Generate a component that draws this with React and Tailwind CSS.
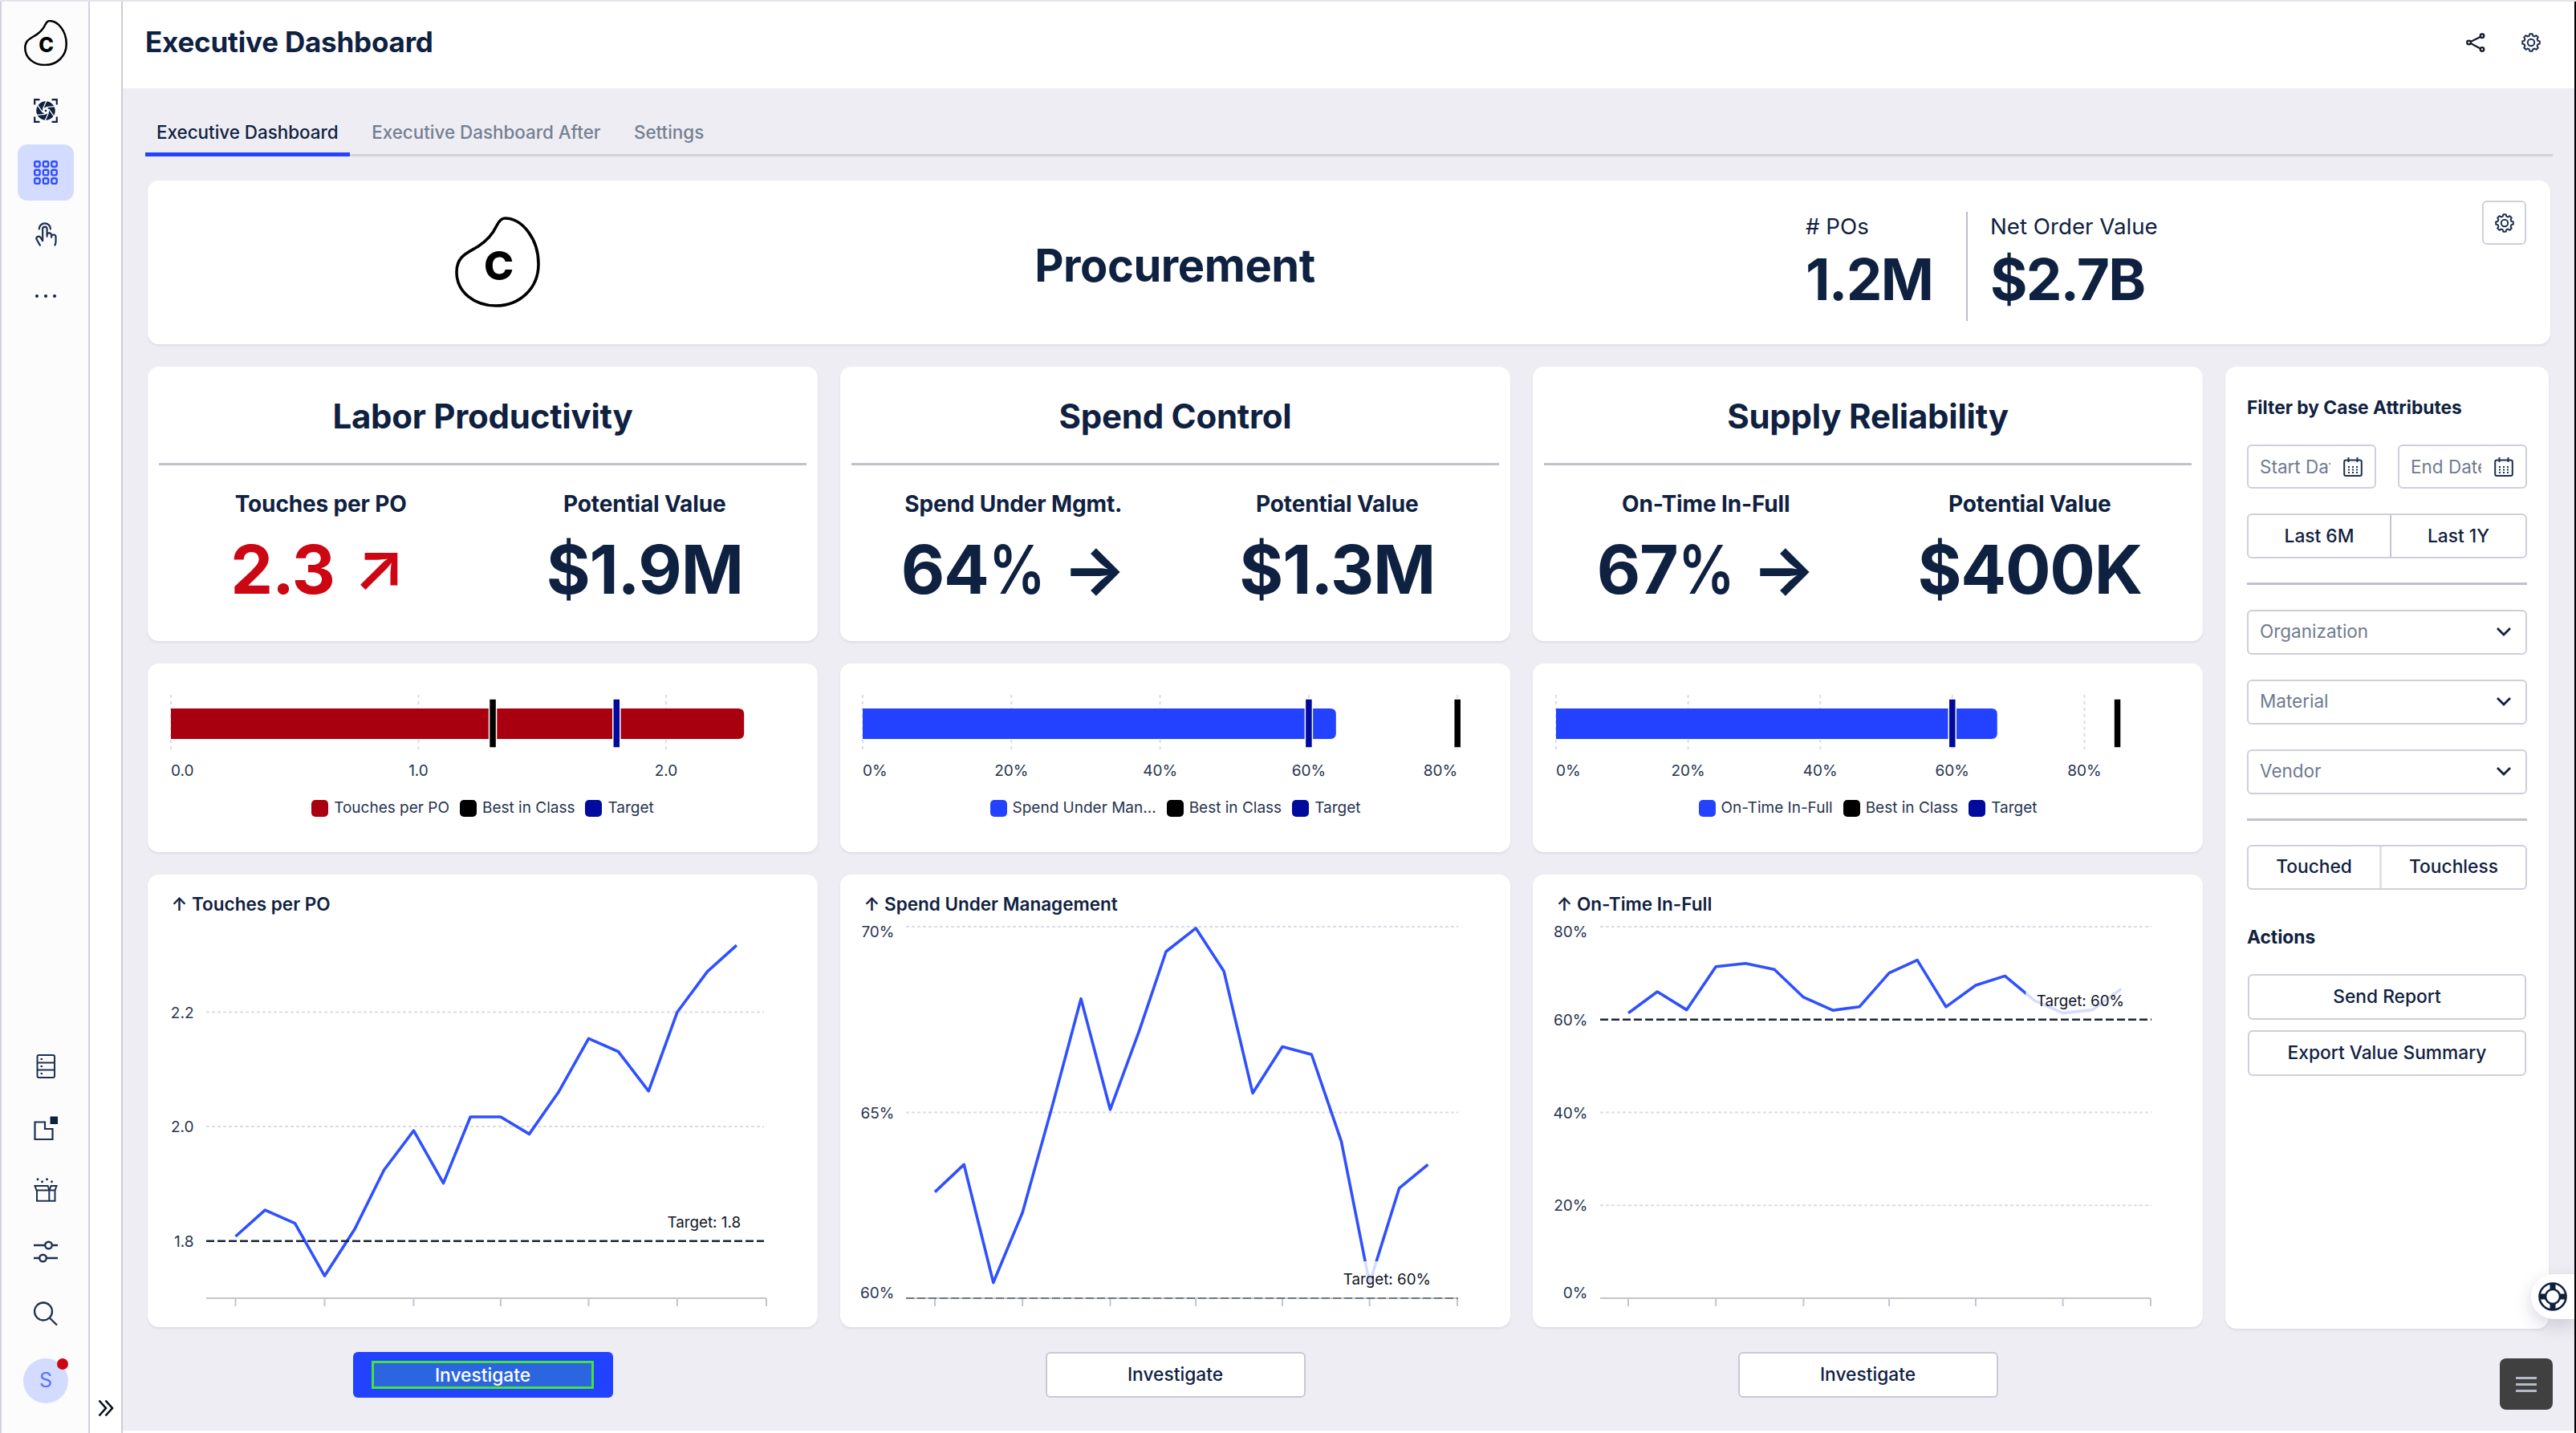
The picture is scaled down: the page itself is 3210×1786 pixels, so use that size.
import { PiHandTap } from 'react-icons/pi';

// Horizontal offsets (px) of the monthly data points
const MONTHS = [0, 36.8, 74, 111, 148.6, 185, 222, 259, 292.7, 330.4, 366, 402.4, 440, 477, 514.7, 550.4, 588, 624.4];
const TICKS = [0, 111, 222, 330.4, 440, 550.4, 661.5];

const KPIS = [
  {
    title: 'Labor Productivity',
    label: 'Touches per PO',
    value: '2.3',
    arrow: '↗',
    alert: true,
    potential: '$1.9M',
    bullet: {
      start: 29, unit: 308.5, value: 2.315, best: 1.3, target: 1.8, color: '#a9000f', legend: 'Touches per PO',
      ticks: [
        { v: 0, text: '0.0', anchor: 'start' },
        { v: 1, text: '1.0', anchor: 'middle' },
        { v: 2, text: '2.0', anchor: 'middle' },
      ],
    },
    line: {
      title: 'Touches per PO', x0: 109.5, xScale: 1, left: 73, right: 768, labelX: 57.5,
      min: 1.7, unit: 713, target: 1.8, targetText: 'Target: 1.8', targetX: 739, targetY: 433,
      grid: [{ v: 2.2, text: '2.2' }, { v: 2.0, text: '2.0' }, { v: 1.8, text: '1.8', hidden: true }],
      data: [1.808, 1.854, 1.831, 1.739, 1.821, 1.924, 1.993, 1.901, 2.017, 2.017, 1.987, 2.06, 2.154, 2.131, 2.062, 2.2, 2.271, 2.317],
    },
  },
  {
    title: 'Spend Control',
    label: 'Spend Under Mgmt.',
    value: '64',
    percent: true,
    arrow: '→',
    potential: '$1.3M',
    bullet: {
      start: 28, unit: 9.265, value: 63.66, best: 80, target: 60, color: '#2342ff', legend: 'Spend Under Man...',
      ticks: [
        { v: 0, text: '0%', anchor: 'start' },
        { v: 20, text: '20%', anchor: 'middle' },
        { v: 40, text: '40%', anchor: 'middle' },
        { v: 60, text: '60%', anchor: 'middle' },
        { v: 80, text: '80%', anchor: 'end' },
      ],
    },
    line: {
      title: 'Spend Under Management', x0: 118, xScale: 0.984, left: 82, right: 770, labelX: 67.5,
      min: 60, unit: 46.3, target: 60, targetText: 'Target: 60%', targetX: 736, targetY: 504,
      grid: [{ v: 70, text: '70%', dy: 6 }, { v: 65, text: '65%' }, { v: 60, text: '60%', dy: -7, hidden: true }],
      data: [62.86, 63.6, 60.42, 62.31, 65.17, 68.06, 65.08, 67.21, 69.33, 69.96, 68.8, 65.52, 66.77, 66.56, 64.22, 60.4, 62.96, 63.6],
    },
  },
  {
    title: 'Supply Reliability',
    label: 'On-Time In-Full',
    value: '67',
    percent: true,
    arrow: '→',
    potential: '$400K',
    bullet: {
      start: 29, unit: 8.23, value: 66.8, best: 85, target: 60, color: '#2342ff', legend: 'On-Time In-Full',
      ticks: [
        { v: 0, text: '0%', anchor: 'start' },
        { v: 20, text: '20%', anchor: 'middle' },
        { v: 40, text: '40%', anchor: 'middle' },
        { v: 60, text: '60%', anchor: 'middle' },
        { v: 80, text: '80%', anchor: 'middle' },
      ],
    },
    line: {
      title: 'On-Time In-Full', x0: 119, xScale: 0.984, left: 84, right: 771, labelX: 68.5,
      min: 0, unit: 5.7875, target: 60, targetText: 'Target: 60%', targetX: 737, targetY: 157,
      grid: [
        { v: 80, text: '80%', dy: 6 },
        { v: 60, text: '60%', hidden: true },
        { v: 40, text: '40%' },
        { v: 20, text: '20%' },
        { v: 0, text: '0%', dy: -7, hidden: true },
      ],
      data: [61.4, 66, 62.1, 71.4, 72.1, 70.8, 64.8, 62, 62.75, 70.05, 72.8, 62.75, 67.4, 69.4, 64.1, 61.4, 62.1, 66.6],
    },
  },
];

function Logo({ className, stroke }) {
  return (
    <svg className={className} viewBox="0 0 106 113" fill="none">
      <path
        d="M62 2C57 2 54 7 51.500 12C46 24 38 31 29 37C16 45 2 49 2 69C2 94 24 111 51 111C80 111 104 90 104 59C104 28 84 2 62 2Z"
        stroke="#000"
        strokeWidth={stroke}
      />
      <text x="54.500" y="79" textAnchor="middle" fontSize="50" fontWeight="800" fill="#000">C</text>
    </svg>
  );
}

// Eight rounded teeth around a ring
const GEAR_PATH = (() => {
  const pts = [];
  for (let i = 0; i < 8; i++) {
    const a = (i * Math.PI) / 4 - Math.PI / 2;
    [[-0.26, 8.7], [-0.15, 10.9], [0.15, 10.9], [0.26, 8.7]].forEach(([d, r]) => {
      pts.push(`${(12 + r * Math.cos(a + d)).toFixed(2)} ${(12 + r * Math.sin(a + d)).toFixed(2)}`);
    });
  }
  return `M${pts.join('L')}Z`;
})();

function GearIcon() {
  return (
    <svg className="size-6" viewBox="0 0 24 24" fill="none" stroke="#1d3050" strokeWidth="2" strokeLinejoin="round">
      <path d={GEAR_PATH} />
      <circle cx="12" cy="12" r="4.200" />
    </svg>
  );
}

function ShareIcon() {
  return (
    <svg className="size-6" viewBox="0 0 24 24" fill="none" stroke="#141c2b" strokeWidth="2.300">
      <circle cx="3.500" cy="12" r="2.300" />
      <circle cx="20" cy="3.800" r="2.300" />
      <circle cx="20" cy="20.500" r="2.300" />
      <path d="M5.700 11 17.800 5M5.700 13 17.800 19.400" />
    </svg>
  );
}

function FocusIcon() {
  return (
    <svg className="size-[30px]" viewBox="0 0 30 30" fill="none" stroke="#0f2140" strokeWidth="2.200">
      <path d="M1.200 7.500V1.200H7.500M22.500 1.200H28.800V7.500M28.800 22.500V28.800H22.500M7.500 28.800H1.200V22.500" />
      <circle cx="15" cy="15" r="8" strokeWidth="7.500" />
      <g stroke="#fcfcfc" strokeWidth="1.300">
        {[0, 60, 120, 180, 240, 300].map((deg) => (
          <path key={deg} d="M11.500 12.500 16 2.500" transform={`rotate(${deg} 15 15)`} />
        ))}
      </g>
      <circle cx="15" cy="15" r="1.300" fill="#0f2140" stroke="none" />
    </svg>
  );
}

function GridIcon() {
  return (
    <svg className="size-[30px]" viewBox="0 0 30 30" fill="none" stroke="#2f4dff" strokeWidth="2.400">
      {[1.2, 11.8, 22.3].map((y) =>
        [1.2, 11.8, 22.3].map((x) => <rect key={`${x}-${y}`} x={x} y={y} width="6.400" height="6.600" rx="1.800" />)
      )}
    </svg>
  );
}

function ServerIcon() {
  return (
    <svg className="size-[30px]" viewBox="0 0 30 30" fill="none" stroke="#1d3050" strokeWidth="2">
      <rect x="4.500" y="1" width="21.500" height="28" rx="2" />
      <path d="M4.500 10.500H26M4.500 19.500H26" />
      <path d="M8.500 6h2.500M8.500 15h2.500M8.500 24h2.500" />
    </svg>
  );
}

function ShapeIcon() {
  return (
    <svg className="size-[30px]" viewBox="0 0 30 30" fill="none" stroke="#1d3050" strokeWidth="2.200">
      <path d="M1.500 7.500H14V16H23.500V29H1.500Z" />
      <rect x="20.500" y="0.500" width="9.500" height="9.500" fill="#0f2140" stroke="none" />
    </svg>
  );
}

function BoxIcon() {
  return (
    <svg className="size-[30px]" viewBox="0 0 30 30" fill="none" stroke="#1d3050" strokeWidth="2">
      <path d="M4 16V28.800H26.500V16M1.500 10H17.500L19.500 15.500H3.500ZM21.500 10H28.500L26.500 15.500H19.500ZM19.300 15.500V28.800" />
      <g fill="#1d3050" stroke="none">
        <circle cx="5" cy="1.800" r="1.500" />
        <circle cx="10.500" cy="4.800" r="1.500" />
        <circle cx="16.500" cy="1.800" r="1.500" />
        <circle cx="22.500" cy="4.800" r="1.500" />
      </g>
    </svg>
  );
}

function SlidersIcon() {
  return (
    <svg className="size-[30px]" viewBox="0 0 30 30" fill="none" stroke="#1d3050" strokeWidth="2.400">
      <path d="M0 7H14M23 7H30M0 23H7M16 23H30" />
      <circle cx="18.500" cy="7" r="4.300" />
      <circle cx="11.500" cy="23" r="4.300" />
    </svg>
  );
}

function SearchIcon() {
  return (
    <svg className="size-[30px]" viewBox="0 0 30 30" fill="none" stroke="#1d3050" strokeWidth="2.300">
      <circle cx="12" cy="12.500" r="11" />
      <path d="M19.800 20.500 29 29.500" />
    </svg>
  );
}

function CalendarIcon() {
  return (
    <svg className="size-6 shrink-0" viewBox="0 0 24 24" fill="none" stroke="#1d3050" strokeWidth="2">
      <rect x="1.200" y="3.500" width="21.600" height="19.500" rx="2" />
      <path d="M6.500 0V6M17.500 0V6" />
      <path d="M6 12H18.500M6 15.500H18.500M6 19H18.500" strokeDasharray="2 3" />
    </svg>
  );
}

function LifebuoyIcon() {
  return (
    <svg className="size-9" viewBox="0 0 36 36" fill="none" stroke="#0f2140">
      <circle cx="18" cy="18" r="16.500" strokeWidth="2.600" />
      <circle cx="18" cy="18" r="9" strokeWidth="2.600" />
      <path d="M18 2V9.500M18 26.500V34M2 18H9.500M26.500 18H34" strokeWidth="7" />
    </svg>
  );
}

function Sidebar() {
  return (
    <nav className="flex w-[112px] shrink-0 flex-col items-center border-r-2 border-l-2 border-[#d3d3df] bg-[#fcfcfc] pt-[23px] pl-[2px]">
      <Logo className="h-[57px] w-[54px]" stroke="5" />
      <div className="mt-[41px]"><FocusIcon /></div>
      <div className="mt-[27px] flex h-[70px] w-[70px] items-center justify-center rounded-xl bg-[#d3dcff]">
        <GridIcon />
      </div>
      <PiHandTap className="mt-[25px] size-[35px] text-[#1d3050]" />
      <div className="mt-[57px] flex gap-[7px]">
        <span className="size-1 rounded-full bg-[#0f2140]" />
        <span className="size-1 rounded-full bg-[#0f2140]" />
        <span className="size-1 rounded-full bg-[#0f2140]" />
      </div>
      <div className="mt-auto flex flex-col items-center gap-[47px]">
        <ServerIcon />
        <ShapeIcon />
        <BoxIcon />
        <SlidersIcon />
        <SearchIcon />
      </div>
      <div className="relative mt-[41px] mb-[37px] flex size-[56px] items-center justify-center rounded-full bg-[#d3dcff] text-[25px] text-[#5872ff]">
        S
        <span className="absolute top-0 right-0 size-[14px] rounded-full bg-[#cc0612]" />
      </div>
    </nav>
  );
}

function Card({ className, children }) {
  return <section className={`rounded-[14px] bg-white shadow-[0_2px_3px_rgba(40,40,90,0.08)] ${className}`}>{children}</section>;
}

function KpiCard({ kpi }) {
  return (
    <Card className="h-[342px] px-[14px]">
      <h2 className="flex h-[120px] items-center justify-center pt-[3px] text-[42px] font-bold tracking-[-0.25px]">{kpi.title}</h2>
      <div className="h-[3px] bg-[#bfc1cc]" />
      <div className="grid grid-cols-2 text-center text-[28px] font-bold tracking-[-0.15px]">
        <div className="flex h-24 items-center justify-center">{kpi.label}</div>
        <div className="flex h-24 items-center justify-center">Potential Value</div>
      </div>
      <div className="grid grid-cols-2 text-center text-[84px] leading-[68px] font-bold tracking-[-1.2px]">
        <div className={kpi.alert ? 'flex justify-center pr-[8px] text-[#cc0612]' : 'flex justify-center'}>
          <span>{kpi.value}</span>
          {kpi.percent && <span className="-mr-[13px] inline-block origin-left scale-x-[0.84] font-semibold">%</span>}
          <span className={kpi.alert ? '-mt-[5px] ml-[23px] font-semibold' : 'ml-[22px]'}>{kpi.arrow}</span>
        </div>
        <div>{kpi.potential}</div>
      </div>
    </Card>
  );
}

function LegendItem({ color, children }) {
  return (
    <div className="flex items-center gap-[7px]">
      <span className="size-[21px] rounded-[5px]" style={{ backgroundColor: color }} />
      {children}
    </div>
  );
}

function BulletCard({ bullet }) {
  const x = (v) => bullet.start + v * bullet.unit;
  const end = x(bullet.value);
  return (
    <Card className="h-[235px]">
      <svg className="block h-[166px] w-full" viewBox="0 0 835 166">
        {bullet.ticks.map((t) => (
          <g key={t.v}>
            <line x1={x(t.v)} x2={x(t.v)} y1="39" y2="107" stroke="#dcdce6" strokeWidth="2" strokeDasharray="4 4" />
            <text x={x(t.v)} y="139.500" textAnchor={t.anchor} fontSize="19" fill="#26344f">{t.text}</text>
          </g>
        ))}
        <path d={`M${bullet.start} 56H${end - 7}Q${end} 56 ${end} 63V87Q${end} 94 ${end - 7} 94H${bullet.start}Z`} fill={bullet.color} />
        <rect x={x(bullet.best) - 4.5} y="44" width="9" height="61" fill="#000" stroke="#fff" strokeWidth="1.500" />
        <rect x={x(bullet.target) - 4.5} y="44" width="9" height="61" fill="#000a9c" stroke="#fff" strokeWidth="1.500" />
      </svg>
      <div className="flex h-[28px] items-center justify-center gap-[13px] text-[19px] text-[#26344f]">
        <LegendItem color={bullet.color}>{bullet.legend}</LegendItem>
        <LegendItem color="#000000">Best in Class</LegendItem>
        <LegendItem color="#000a9c">Target</LegendItem>
      </div>
    </Card>
  );
}

function LineCard({ line }) {
  const y = (v) => 528 - (v - line.min) * line.unit;
  const x = (m) => line.x0 + m * line.xScale;
  const points = line.data.map((v, i) => `${x(MONTHS[i])},${y(v)}`).join(' ');
  const labelWidth = line.targetText.length * 9.7;
  return (
    <Card className="h-[564px]">
      <svg className="block h-full w-full" viewBox="0 0 835 564">
        <text x="29.500" y="45" fontSize="22.500" fontWeight="600" fill="#0f2140">↑ {line.title}</text>
        {line.grid.map((g) => (
          <g key={g.text}>
            {!g.hidden && <line x1={line.left} x2={line.right} y1={y(g.v)} y2={y(g.v)} stroke="#dcdce6" strokeWidth="2" strokeDasharray="4 3" />}
            <text x={line.labelX} y={y(g.v) + 7 + (g.dy || 0)} textAnchor="end" fontSize="19" fill="#26344f">{g.text}</text>
          </g>
        ))}
        <line x1={line.left} x2={x(661.5)} y1="528" y2="528" stroke="#c3c4d2" strokeWidth="2" />
        {TICKS.map((t) => (
          <line key={t} x1={x(t)} x2={x(t)} y1="528" y2="538" stroke="#c3c4d2" strokeWidth="2" />
        ))}
        <polyline points={points} fill="none" stroke="#2f50ff" strokeWidth="3.600" strokeLinejoin="round" />
        <line x1={line.left} x2={line.right} y1={y(line.target)} y2={y(line.target)} stroke="#1b2438" strokeWidth={line.target === line.min ? 1.2 : 2.6} strokeDasharray="10 4" />
        <rect x={line.targetX - labelWidth - 16} y={line.targetY - 22} width={labelWidth + 32} height="44" fill="#fff" fillOpacity="0.8" />
        <text x={line.targetX} y={line.targetY + 7} textAnchor="end" fontSize="18.800" fill="#10151f">{line.targetText}</text>
      </svg>
    </Card>
  );
}

function Select({ children }) {
  return (
    <div className="flex h-[56px] items-center justify-between rounded-md border-2 border-[#cfcfdc] px-[14px] pb-[2px] text-[22.5px] text-[#6f7a90]">
      {children}
      <svg className="mr-[3px] h-[12px] w-[20px]" viewBox="0 0 20 12" fill="none" stroke="#0f2140" strokeWidth="2.800">
        <path d="M2 2 10 10 18 2" />
      </svg>
    </div>
  );
}

function DateField({ children }) {
  return (
    <div className="flex h-[55px] w-[161px] items-center justify-between rounded-md border-2 border-[#cfcfdc] pr-[15px] pl-[14px] text-[22.5px] text-[#6f7a90]">
      <span className="w-[88px] overflow-hidden whitespace-nowrap">{children}</span>
      <CalendarIcon />
    </div>
  );
}

function FilterPanel() {
  return (
    <Card className="h-[1199px] w-[403px] shrink-0 px-[27px] pt-[36px] text-[22.75px] font-medium">
      <h3 className="h-[30px] leading-[30px] font-bold">Filter by Case Attributes</h3>
      <div className="mt-[31px] flex justify-between font-normal">
        <DateField>Start Date</DateField>
        <DateField>End Date</DateField>
      </div>
      <div className="mt-[31px] flex h-[56px] rounded-md border-2 border-[#cfcfdc]">
        <div className="flex w-[178px] items-center justify-center border-r-2 border-[#c3c4d2]">Last 6M</div>
        <div className="flex flex-1 items-center justify-center">Last 1Y</div>
      </div>
      <div className="mt-[30px] h-[3px] bg-[#bfc1cc]" />
      <div className="mt-[31px] flex flex-col gap-[31px] font-normal">
        <Select>Organization</Select>
        <Select>Material</Select>
        <Select>Vendor</Select>
      </div>
      <div className="mt-[30px] h-[3px] bg-[#bfc1cc]" />
      <div className="mt-[30px] flex h-[56px] rounded-md border-2 border-[#cfcfdc]">
        <div className="flex w-[166px] items-center justify-center border-r-3 border-[#e1e1ea] pb-[2px]">Touched</div>
        <div className="flex flex-1 items-center justify-center pb-[2px]">Touchless</div>
      </div>
      <h3 className="mt-[44px] h-[30px] leading-[30px] font-bold">Actions</h3>
      <div className="mt-[31px] flex flex-col gap-[13px] px-px">
        <button className="h-[57px] rounded-md border-2 border-[#cfcfdc]">Send Report</button>
        <button className="h-[57px] rounded-md border-2 border-[#cfcfdc]">Export Value Summary</button>
      </div>
    </Card>
  );
}

function App() {
  return (
    <div className="relative flex h-[1786px] w-[3210px] overflow-hidden border-t-2 border-[#e3e3eb] bg-white font-['Inter',sans-serif] text-[#0f2140]">
      <Sidebar />
      <div className="flex w-[41px] shrink-0 items-end justify-center border-r-2 border-[#cdcdda] pb-[20px]">
        <svg className="h-[22px] w-[20px]" viewBox="0 0 20 22" fill="none" stroke="#0b0f18" strokeWidth="2.600">
          <path d="M1.500 1.500 10 11 1.500 20.500M9.500 1.500 18 11 9.500 20.500" />
        </svg>
      </div>

      <div className="flex flex-1 flex-col">
        <header className="flex h-[108px] shrink-0 items-center justify-between pr-[44px] pb-[7px] pl-[28px]">
          <h1 className="text-[35px] font-bold tracking-[-0.2px]">Executive Dashboard</h1>
          <div className="flex gap-[45px]">
            <ShareIcon />
            <GearIcon />
          </div>
        </header>

        <main className="h-[1673px] shrink-0 bg-[#eeedf3] pl-[28px]">
          <div className="flex h-[85px] w-[3000px] gap-[13.5px] border-b-3 border-[#d2d3da] text-[22.4px] font-medium text-[#747f92]">
            <div className="-mb-[3px] border-b-5 border-[#2342ff] px-[14px] pt-[38px] text-[#0f2140]">Executive Dashboard</div>
            <div className="px-[14px] pt-[38px]">Executive Dashboard After</div>
            <div className="px-[14px] pt-[38px]">Settings</div>
          </div>

          <Card className="mt-[30px] ml-[3px] flex h-[204px] w-[2994px]">
            <div className="flex w-[871px] items-center justify-center pb-[2px]">
              <Logo className="h-[113px] w-[106px]" stroke="3.600" />
            </div>
            <div className="flex w-[818px] items-center justify-center pt-2 text-[56px] font-bold tracking-[-0.45px]">Procurement</div>
            <div className="ml-[377px] w-[200px] pt-[38px]">
              <div className="text-[27.7px] leading-[38px]"># POs</div>
              <div className="mt-[11px] text-[71px] leading-[72px] font-bold tracking-[-1.8px]">1.2M</div>
            </div>
            <div className="mt-[39px] h-[136px] w-[2px] bg-[#b9bbc9]" />
            <div className="pt-[38px] pl-[28px]">
              <div className="text-[27.7px] leading-[38px]">Net Order Value</div>
              <div className="mt-[11px] text-[71px] leading-[72px] font-bold tracking-[-1.8px]">$2.7B</div>
            </div>
            <div className="mt-[25px] mr-[30px] ml-auto flex size-[55px] items-center justify-center rounded-md border-2 border-[#cfcfdc]">
              <GearIcon />
            </div>
          </Card>

          <div className="mt-[28px] ml-[3px] flex gap-[28px]">
            {KPIS.map((kpi) => (
              <div key={kpi.title} className="flex w-[835px] flex-col gap-[28px]">
                <KpiCard kpi={kpi} />
                <BulletCard bullet={kpi.bullet} />
                <LineCard line={kpi.line} />
                <button
                  className={
                    kpi.alert
                      ? 'mt-[3px] flex h-[57px] w-[324px] items-center justify-center self-center rounded-md bg-[#2342ff] text-[22.75px] font-medium text-white'
                      : 'mt-[3px] flex h-[57px] w-[324px] items-center justify-center self-center rounded-md border-2 border-[#c9c9d6] bg-white text-[22.75px] font-medium'
                  }
                >
                  {kpi.alert ? (
                    <span className="h-[35px] w-[277px] border-3 border-[#44e33a] bg-[#2b65e0] leading-[29px]">Investigate</span>
                  ) : (
                    'Investigate'
                  )}
                </button>
              </div>
            ))}
            <FilterPanel />
          </div>
        </main>
      </div>

      {/* floating help tab and menu button */}
      <div className="absolute top-[1586px] right-[2px] flex h-[56px] w-[54px] items-center rounded-l-full bg-white pl-[9px] shadow-[0_8px_22px_rgba(40,40,90,0.18)]">
        <LifebuoyIcon />
      </div>
      <div className="absolute top-[1691px] right-[29px] flex h-[64px] w-[66px] flex-col items-center justify-center gap-[5px] rounded-lg bg-[#404040]">
        <span className="h-[3px] w-[26px] bg-[#b4b8c9]" />
        <span className="h-[3px] w-[26px] bg-[#b4b8c9]" />
        <span className="h-[3px] w-[26px] bg-[#b4b8c9]" />
      </div>
      <div className="absolute -top-[2px] right-0 h-[1786px] w-[2px] bg-black" />
    </div>
  );
}

export default App;
